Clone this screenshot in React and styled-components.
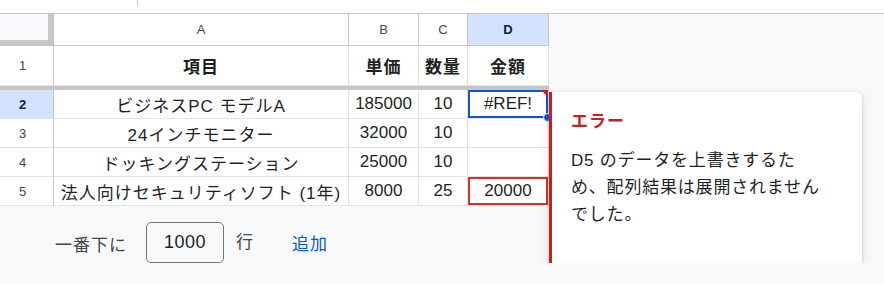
import styled, { createGlobalStyle } from "styled-components";

const GlobalStyle = createGlobalStyle`
  html, body {
    margin: 0;
    padding: 0;
    background: #f8f9fa;
  }
  body {
    font-family: "Liberation Sans", "Noto Sans CJK JP", sans-serif;
    color: #1f1f1f;
  }
`;

const columns = ["A", "B", "C", "D"];

const rows = [
  { n: 2, item: "ビジネスPC モデルA", price: "185000", qty: "10", total: "#REF!", selected: true },
  { n: 3, item: "24インチモニター", price: "32000", qty: "10", total: "" },
  { n: 4, item: "ドッキングステーション", price: "25000", qty: "10", total: "" },
  { n: 5, item: "法人向けセキュリティソフト (1年)", price: "8000", qty: "25", total: "20000", spill: true },
];

function App() {
  return (
    <>
      <GlobalStyle />
      <TopBar>
        <Tick />
      </TopBar>
      <SheetArea>
        <Grid>
          <Corner />
          {columns.map((c) => (
            <ColHeader key={c} $active={c === "D"}>
              {c}
            </ColHeader>
          ))}

          <RowHeader>1</RowHeader>
          <Cell $bold $tall>項目</Cell>
          <Cell $bold $tall>単価</Cell>
          <Cell $bold $tall>数量</Cell>
          <Cell $bold $tall>金額</Cell>

          <FreezeBar />

          {rows.map((r) => (
            <Row key={r.n} r={r} />
          ))}
        </Grid>

        <ErrorCard>
          <ErrorTitle>エラー</ErrorTitle>
          <ErrorBody>
            D5 のデータを上書きするた
            <br />
            め、配列結果は展開されません
            <br />
            でした。
          </ErrorBody>
        </ErrorCard>
      </SheetArea>

      <Footer>
        <FooterText>一番下に</FooterText>
        <RowsInput defaultValue="1000" />
        <FooterText $tight>行</FooterText>
        <AddLink>追加</AddLink>
      </Footer>
    </>
  );
}

function Row({ r }) {
  return (
    <>
      <RowHeader $active={r.selected}>{r.n}</RowHeader>
      <Cell $spaced>{r.item}</Cell>
      <Cell>{r.price}</Cell>
      <Cell>{r.qty}</Cell>
      {r.selected ? (
        <SelectedCell>
          {r.total}
          <ErrorMark />
          <FillHandle />
        </SelectedCell>
      ) : (
        <Cell $outline={r.spill ? "#d93025" : null}>{r.total}</Cell>
      )}
    </>
  );
}

const TopBar = styled.div`
  height: 13px;
  background: #ffffff;
  border-bottom: 1px solid #c4c7c5;
  position: relative;
`;

const Tick = styled.span`
  position: absolute;
  left: 137px;
  top: 0;
  width: 1px;
  height: 6px;
  background: #c4c7c5;
`;

const SheetArea = styled.div`
  position: relative;
`;

const Grid = styled.div`
  display: grid;
  grid-template-columns: 54px 295px 70px 49px 81px;
  grid-auto-rows: 29px;
  grid-template-rows: 32px 40px 4px;
  width: 549px;
`;

const Corner = styled.div`
  background: #f8fafd;
  border-right: 1px solid #c4c7c5;
  border-bottom: 1px solid #c4c7c5;
  box-shadow: inset -5px -5px 0 #c4c7c5;
`;

const ColHeader = styled.div`
  display: flex;
  align-items: center;
  justify-content: center;
  font-size: 13px;
  background: ${(p) => (p.$active ? "#d3e3fd" : "#ffffff")};
  color: ${(p) => (p.$active ? "#041e49" : "#444746")};
  font-weight: ${(p) => (p.$active ? 700 : 400)};
  border-right: 1px solid #c4c7c5;
  border-bottom: 1px solid #c4c7c5;
`;

const RowHeader = styled.div`
  display: flex;
  align-items: center;
  justify-content: center;
  padding-right: 8px;
  font-size: 13px;
  background: ${(p) => (p.$active ? "#d3e3fd" : "#ffffff")};
  color: ${(p) => (p.$active ? "#041e49" : "#444746")};
  font-weight: ${(p) => (p.$active ? 700 : 400)};
  border-right: 1px solid #c4c7c5;
  border-bottom: 1px solid #e1e3e1;
`;

const Cell = styled.div`
  display: flex;
  align-items: center;
  justify-content: center;
  white-space: nowrap;
  overflow: hidden;
  background: #ffffff;
  font-size: 17px;
  font-weight: ${(p) => (p.$bold ? 700 : 400)};
  letter-spacing: ${(p) => (p.$spaced || p.$bold ? "1px" : "0")};
  border-right: 1px solid #e1e3e1;
  border-bottom: 1px solid #e1e3e1;
  box-shadow: ${(p) => (p.$outline ? `inset 0 0 0 2px ${p.$outline}` : "none")};
`;

const SelectedCell = styled(Cell)`
  position: relative;
  overflow: visible;
  box-shadow: inset 0 0 0 2px #0b57d0;
`;

const ErrorMark = styled.span`
  position: absolute;
  top: 0;
  right: 0;
  width: 0;
  height: 0;
  border-top: 7px solid #c5221f;
  border-left: 7px solid transparent;
`;

const FillHandle = styled.span`
  position: absolute;
  right: -4px;
  bottom: -4px;
  width: 7px;
  height: 7px;
  border-radius: 50%;
  background: #0b57d0;
  border: 1px solid #ffffff;
  z-index: 1;
`;

const FreezeBar = styled.div`
  grid-column: 1 / -1;
  background: #c7c7c7;
`;

const ErrorCard = styled.div`
  position: absolute;
  left: 549px;
  top: 78px;
  width: 313px;
  height: 175px;
  box-sizing: border-box;
  padding: 18px 16px 0 19px;
  background: #ffffff;
  border-left: 3px solid #c5221f;
  border-radius: 0 6px 6px 0;
  box-shadow: 0 1px 3px rgba(60, 64, 67, 0.2), 0 4px 10px 2px rgba(60, 64, 67, 0.1);
  z-index: 2;
`;

const ErrorTitle = styled.div`
  color: #c5221f;
  font-size: 17px;
  font-weight: 700;
  letter-spacing: 1px;
  line-height: 24px;
`;

const ErrorBody = styled.div`
  margin-top: 13px;
  font-size: 17px;
  letter-spacing: 0.8px;
  line-height: 27px;
  color: #1f1f1f;
`;

const Footer = styled.div`
  display: flex;
  align-items: center;
  padding: 16px 0 0 55px;
`;

const FooterText = styled.span`
  font-size: 17px;
  letter-spacing: 1px;
  color: #444746;
  margin-left: ${(p) => (p.$tight ? "12px" : "0")};
  margin-top: ${(p) => (p.$tight ? "-4px" : "2px")};
`;

const RowsInput = styled.input`
  box-sizing: border-box;
  width: 78px;
  height: 41px;
  margin-left: 19px;
  border: 1px solid #747775;
  border-radius: 5px;
  background: #f8f9fa;
  font-family: "Liberation Sans", "Noto Sans CJK JP", sans-serif;
  font-size: 18px;
  letter-spacing: 0.5px;
  color: #1f1f1f;
  text-align: center;
  outline: none;
`;

const AddLink = styled.span`
  margin-left: 38px;
  font-size: 17px;
  letter-spacing: 1px;
  color: #0b57d0;
  cursor: pointer;
`;

export default App;
